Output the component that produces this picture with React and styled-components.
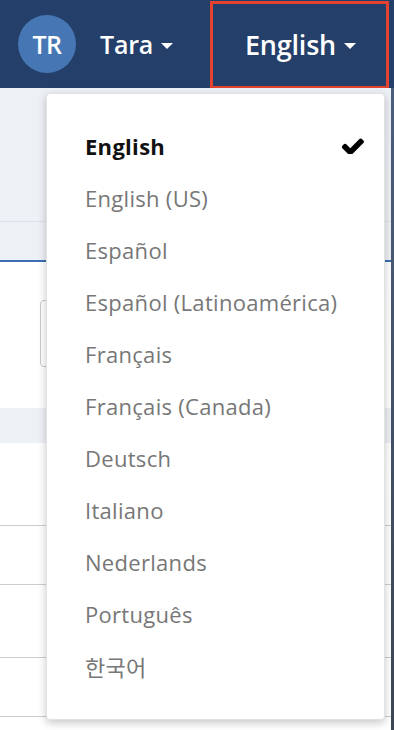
import React from "react";
import styled, { createGlobalStyle } from "styled-components";

const Global = createGlobalStyle`
  html, body { margin: 0; padding: 0; }
  body {
    width: 394px;
    height: 730px;
    overflow: hidden;
    background: #ffffff;
    font-family: "Open Sans", "Noto Sans", "Noto Sans CJK KR", sans-serif;
  }
`;

const Page = styled.div`
  position: relative;
  width: 394px;
  height: 730px;
  overflow: hidden;
  display: flex;
  flex-direction: column;
  &::after {
    content: "";
    position: absolute;
    top: 88px;
    right: 0;
    width: 3px;
    bottom: 0;
    background: linear-gradient(#4b5f7c, #3d4654);
  }
`;

const Header = styled.header`
  height: 88px;
  flex: none;
  background: #243f69;
  display: flex;
  align-items: center;
  padding-left: 18px;
  box-sizing: border-box;
`;

const Avatar = styled.div`
  width: 58px;
  height: 58px;
  border-radius: 50%;
  background: #4677b4;
  color: #fff;
  display: flex;
  align-items: center;
  justify-content: center;
  font-size: 25px;
  font-weight: 600;
  letter-spacing: -0.5px;
`;

const MenuTrigger = styled.div`
  display: flex;
  align-items: center;
  gap: 8px;
  color: #fff;
  font-size: ${(p) => p.$size}px;
  font-weight: 600;
  margin-left: ${(p) => p.$ml || 0}px;
  letter-spacing: -0.2px;
`;

const Caret = styled.span`
  width: 0;
  height: 0;
  border-left: 6px solid transparent;
  border-right: 6px solid transparent;
  border-top: 6px solid #fff;
  margin-top: 3px;
`;

const LangButton = styled.div`
  margin-left: auto;
  margin-right: 5px;
  width: 179px;
  height: 88px;
  margin-top: 2px;
  box-sizing: border-box;
  border: 3px solid #e5432f;
  display: flex;
  align-items: center;
  justify-content: center;
  padding-left: 2px;
  padding-bottom: 1px;
`;

const GreyBand = styled.div`
  flex: none;
  height: ${(p) => p.$h}px;
  background: #edf0f5;
  border-bottom: ${(p) => p.$border || "none"};
`;

const WhiteBlock = styled.div`
  flex: none;
  height: ${(p) => p.$h}px;
  background: #fff;
  border-bottom: ${(p) => p.$border || "none"};
  box-sizing: border-box;
  padding-top: ${(p) => p.$pt || 0}px;
  padding-left: ${(p) => p.$pl || 0}px;
`;

const InputBox = styled.div`
  height: 67px;
  width: 300px;
  border: 1px solid #c9c9c9;
  border-radius: 4px;
  box-sizing: border-box;
`;

const Dropdown = styled.ul`
  position: absolute;
  top: 93px;
  left: 46px;
  width: 339px;
  height: 627px;
  margin: 0;
  list-style: none;
  box-sizing: border-box;
  padding: 26px 0 0 0;
  background: #fff;
  border-radius: 4px;
  border: 1px solid #e2e2e2;
  box-shadow: 0 3px 8px rgba(0, 0, 0, 0.22);
  z-index: 2;
`;

const Item = styled.li`
  height: 52px;
  display: flex;
  align-items: center;
  justify-content: space-between;
  padding: 0 20px 0 38px;
  font-size: 22px;
  letter-spacing: 0.3px;
  font-weight: ${(p) => (p.$active ? 700 : 400)};
  color: ${(p) => (p.$active ? "#111" : "#777")};
`;

const Check = () => (
  <svg width="22" height="16" viewBox="141 362 1530 996" fill="#000">
    <path d="M1671 566q0 40-28 68l-724 724-136 136q-28 28-68 28t-68-28l-136-136-362-362q-28-28-28-68t28-68l136-136q28-28 68-28t68 28l294 295 656-657q28-28 68-28t68 28l136 136q28 28 28 68z" />
  </svg>
);

const languages = [
  "English",
  "English (US)",
  "Español",
  "Español (Latinoamérica)",
  "Français",
  "Français (Canada)",
  "Deutsch",
  "Italiano",
  "Nederlands",
  "Português",
  "한국어",
];

export default function App() {
  return (
    <>
      <Global />
      <Page>
        <Header>
          <Avatar>TR</Avatar>
          <MenuTrigger $size={25} $ml={24}>
            Tara <Caret />
          </MenuTrigger>
          <LangButton>
            <MenuTrigger $size={27}>
              English <Caret />
            </MenuTrigger>
          </LangButton>
        </Header>
        <GreyBand $h={133} $border="1px solid #dde1e8" />
        <GreyBand $h={38} $border="2px solid #3d6db0" />
        <WhiteBlock $h={146} $pt={38} $pl={40}>
          <InputBox />
        </WhiteBlock>
        <GreyBand $h={35} />
        <WhiteBlock $h={83} $border="1px solid #cdcdcd" />
        <WhiteBlock $h={59} $border="1px solid #cdcdcd" />
        <WhiteBlock $h={73} $border="1px solid #cdcdcd" />
        <WhiteBlock $h={59} $border="1px solid #cdcdcd" />
        <WhiteBlock $h={40} />
        <Dropdown>
          {languages.map((l, i) => (
            <Item key={l} $active={i === 0}>
              <span>{l}</span>
              {i === 0 && <Check />}
            </Item>
          ))}
        </Dropdown>
      </Page>
    </>
  );
}
